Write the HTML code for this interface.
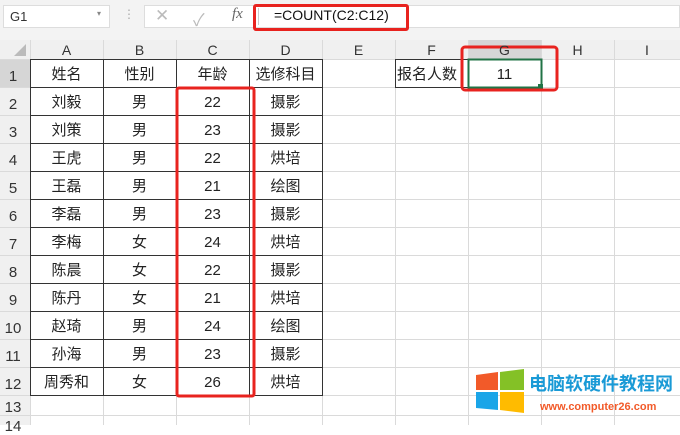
<!DOCTYPE html><html><head><meta charset="utf-8"><style>
*{margin:0;padding:0;box-sizing:border-box}
body{width:680px;height:425px;overflow:hidden;background:#fff;font-family:"Liberation Sans","Noto Sans CJK SC",sans-serif;position:relative}
.a{position:absolute}
.t{position:absolute;display:flex;align-items:center;justify-content:center;font-size:14px;color:#222;font-family:"Liberation Sans","Noto Sans CJK SC",sans-serif;white-space:nowrap;line-height:1}
</style></head><body>
<div class="a" style="left:0;top:0;width:680px;height:40px;background:#f3f3f3"></div>
<div class="a" style="left:3px;top:5px;width:107px;height:23px;background:#fff;border:1px solid #ddd"></div>
<div class="a" style="left:10px;top:9px;font-size:13px;color:#333">G1</div>
<div class="a" style="left:97px;top:9px;font-size:8px;color:#888">▾</div>
<div class="a" style="left:123px;top:7px;font-size:12px;color:#aaa">⋮</div>
<div class="a" style="left:144px;top:5px;width:536px;height:23px;background:#fff;border:1px solid #ddd"></div>
<div class="a" style="left:155px;top:6px;font-size:17px;color:#bbb">✕</div>
<div class="a" style="left:193px;top:6px;font-size:17px;color:#bbb">✓</div>
<div class="a" style="left:232px;top:6px;font-size:15px;color:#666;font-family:'Liberation Serif',serif;font-style:italic">fx</div>
<div class="a" style="left:258px;top:8px;width:1px;height:17px;background:#ccc"></div>
<div class="a" style="left:274px;top:7px;font-size:14px;color:#111">=COUNT(C2:C12)</div>
<div class="a" style="left:253px;top:4px;width:156px;height:27px;border:3px solid #e8231f;border-radius:3px"></div>
<svg class="a" style="left:0;top:0" width="680" height="425">
<rect x="0" y="40" width="680" height="19" fill="#f0f0f0"/>
<rect x="0" y="40" width="30" height="385" fill="#f0f0f0"/>
<rect x="468" y="40" width="73" height="19" fill="#d6d6d6"/>
<rect x="0" y="59" width="30" height="28" fill="#d6d6d6"/>
<polygon points="26,44 26,56 14,56" fill="#bbb"/>
<g stroke="#dadada" stroke-width="1">
<line x1="30.5" y1="40" x2="30.5" y2="425"/><line x1="103.5" y1="40" x2="103.5" y2="425"/><line x1="176.5" y1="40" x2="176.5" y2="425"/><line x1="249.5" y1="40" x2="249.5" y2="425"/><line x1="322.5" y1="40" x2="322.5" y2="425"/><line x1="395.5" y1="40" x2="395.5" y2="425"/><line x1="468.5" y1="40" x2="468.5" y2="425"/><line x1="541.5" y1="40" x2="541.5" y2="425"/><line x1="614.5" y1="40" x2="614.5" y2="425"/>
<line x1="0" y1="59.5" x2="680" y2="59.5"/>
<line x1="0" y1="87.5" x2="680" y2="87.5"/><line x1="0" y1="115.5" x2="680" y2="115.5"/><line x1="0" y1="143.5" x2="680" y2="143.5"/><line x1="0" y1="171.5" x2="680" y2="171.5"/><line x1="0" y1="199.5" x2="680" y2="199.5"/><line x1="0" y1="227.5" x2="680" y2="227.5"/><line x1="0" y1="255.5" x2="680" y2="255.5"/><line x1="0" y1="283.5" x2="680" y2="283.5"/><line x1="0" y1="311.5" x2="680" y2="311.5"/><line x1="0" y1="339.5" x2="680" y2="339.5"/><line x1="0" y1="367.5" x2="680" y2="367.5"/><line x1="0" y1="395.5" x2="680" y2="395.5"/><line x1="0" y1="415.5" x2="680" y2="415.5"/>
</g>
<g stroke="#333" stroke-width="1">
<line x1="30.5" y1="59" x2="30.5" y2="396"/><line x1="103.5" y1="59" x2="103.5" y2="396"/><line x1="176.5" y1="59" x2="176.5" y2="396"/><line x1="249.5" y1="59" x2="249.5" y2="396"/><line x1="322.5" y1="59" x2="322.5" y2="396"/>
<line x1="30" y1="59.5" x2="323" y2="59.5"/>
<line x1="30" y1="87.5" x2="323" y2="87.5"/><line x1="30" y1="115.5" x2="323" y2="115.5"/><line x1="30" y1="143.5" x2="323" y2="143.5"/><line x1="30" y1="171.5" x2="323" y2="171.5"/><line x1="30" y1="199.5" x2="323" y2="199.5"/><line x1="30" y1="227.5" x2="323" y2="227.5"/><line x1="30" y1="255.5" x2="323" y2="255.5"/><line x1="30" y1="283.5" x2="323" y2="283.5"/><line x1="30" y1="311.5" x2="323" y2="311.5"/><line x1="30" y1="339.5" x2="323" y2="339.5"/><line x1="30" y1="367.5" x2="323" y2="367.5"/><line x1="30" y1="395.5" x2="323" y2="395.5"/>
<line x1="395.5" y1="59" x2="395.5" y2="88"/><line x1="395" y1="87.5" x2="469" y2="87.5"/><line x1="395" y1="59.5" x2="469" y2="59.5"/>
</g>
<rect x="468.5" y="59.5" width="73" height="28" fill="none" stroke="#217346" stroke-width="2"/>
<rect x="538" y="84" width="5" height="5" fill="#217346"/>
<rect x="177" y="88" width="77" height="308" rx="2" fill="none" stroke="#e8231f" stroke-width="3"/>
<rect x="462" y="47" width="95" height="43" rx="3" fill="none" stroke="#e8231f" stroke-width="3"/>
<g transform="translate(476,372)"><polygon points="0,3 22,0 22,18 0,18" fill="#f25a29"/><polygon points="24,0 48,-3 48,18 24,18" fill="#84c126"/><polygon points="0,20 22,20 22,38 0,36" fill="#1aa5e8"/><polygon points="24,20 48,20 48,41 24,38" fill="#ffbb00"/></g>
</svg>
<div id="g"></div>
<script>
var cols=["A","B","C","D","E","F","G","H","I"],xs=[30,103,176,249,322,395,468,541,614],h="";
for(var i=0;i<9;i++)h+='<div class="t" style="left:'+xs[i]+'px;top:40px;height:19px;width:'+(i==8?66:73)+'px;color:#333">'+cols[i]+'</div>';
for(var r=1;r<=14;r++){var y=r<=12?59+28*r-20:(r==13?398:417);h+='<div class="t" style="left:0;top:'+y+'px;height:18px;width:26px;font-size:15px;color:#333">'+r+'</div>';}
var d=[["姓名","性别","年龄","选修科目"],["刘毅","男","22","摄影"],["刘策","男","23","摄影"],["王虎","男","22","烘培"],["王磊","男","21","绘图"],["李磊","男","23","摄影"],["李梅","女","24","烘培"],["陈晨","女","22","摄影"],["陈丹","女","21","烘培"],["赵琦","男","24","绘图"],["孙海","男","23","摄影"],["周秀和","女","26","烘培"]];
for(var r=0;r<12;r++)for(var c=0;c<4;c++)h+='<div class="t" style="left:'+xs[c]+'px;top:'+(60+28*r)+'px;height:28px;width:73px;font-size:15px">'+d[r][c]+'</div>';
h+='<div class="t" style="left:397px;top:60px;height:28px;justify-content:flex-start;font-size:15px">报名人数</div>';
h+='<div class="t" style="left:468px;top:60px;height:28px;width:73px;font-size:15px">11</div>';
h+='<div class="a" style="left:529px;top:375px;font-size:18px;font-weight:bold;color:#1a9ad6;white-space:nowrap;line-height:1">电脑软硬件教程网</div>';
h+='<div class="a" style="left:540px;top:401px;font-size:11px;font-weight:bold;color:#f25a29;white-space:nowrap">www.computer26.com</div>';
document.getElementById("g").innerHTML=h;
</script>
</body></html>
